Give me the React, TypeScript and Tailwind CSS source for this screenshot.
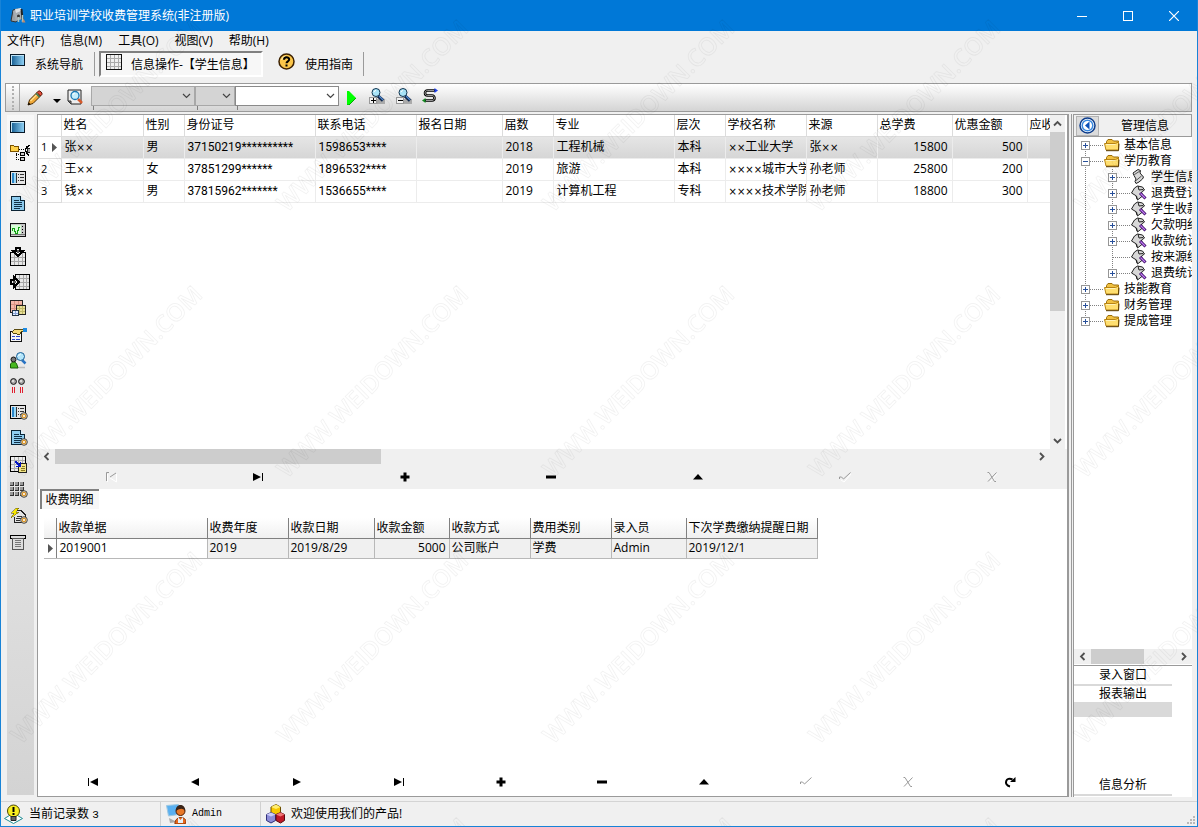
import type { ReactNode } from 'react';

type IconProps = { w?: number; h?: number; children: ReactNode };

const Pix = ({ w = 16, h = 16, children }: IconProps) => (
  <svg width={w} height={h} viewBox={`0 0 ${w} ${h}`} shapeRendering="crispEdges" fill="none" aria-hidden="true" className="shrink-0">
    {children}
  </svg>
);

const Smooth = ({ w = 16, h = 16, children }: IconProps) => (
  <svg width={w} height={h} viewBox={`0 0 ${w} ${h}`} fill="none" aria-hidden="true" className="shrink-0">
    {children}
  </svg>
);

/* ---------- shared icon parts ---------- */

const Gear = () => (
  <g shapeRendering="auto">
    <circle cx="14" cy="12" r="3.300" fill="#e8dcc0" stroke="#333" strokeWidth="0.900" />
    <circle cx="14" cy="12" r="1.700" fill="#fff" stroke="#d8942a" strokeWidth="1.300" />
  </g>
);

const MonitorIcon = () => (
  <Pix w={15} h={12}>
    <defs>
      <linearGradient id="screen" x1="0" x2="1">
        <stop offset="0" stopColor="#1c6498" />
        <stop offset="1" stopColor="#8fd0f4" />
      </linearGradient>
    </defs>
    <rect width="15" height="12" fill="#0a1a28" />
    <rect x="1" y="1" width="13" height="10" fill="#bfe4f8" />
    <rect x="2" y="2" width="12" height="9" fill="url(#screen)" />
  </Pix>
);

const TreeIcon = () => (
  <Pix w={20} h={17}>
    <path d="M0 1h4v1h5v6H0z" fill="#7a5200" />
    <path d="M1 2h3v1h4v4H1z" fill="#ffd24a" />
    <path d="M6.500 9v8M6 10.500h4M6 15.500h4" stroke="#000" strokeDasharray="1 1" />
    <rect x="10.500" y="8.500" width="4" height="3" fill="#ccc" stroke="#000" />
    <rect x="10.500" y="13.500" width="4" height="3" fill="#ccc" stroke="#000" />
    <path d="M9 5.500h6" stroke="#000" strokeDasharray="1 1" />
    <path d="M19.500 1l-3 2.500-1 2.500 1 3 3 2.500" stroke="#000" strokeWidth="1.500" />
    <path d="M17 4h3v5h-3z" fill="#222" />
    <path d="M18 5h2v3h-2z" fill="#aaa" />
  </Pix>
);

const FormIcon = ({ gear = false }: { gear?: boolean }) => (
  <Pix w={18} h={16}>
    <rect x="0.500" y="1.500" width="15" height="13" fill="#e4e4e4" stroke="#000" />
    <rect x="2" y="3" width="4" height="10" fill="#2a86c8" />
    <rect x="4" y="3" width="2" height="10" fill="#9ad8f8" />
    <path d="M6.500 3v10" stroke="#333" />
    <path d="M8 4.500h1M8 7.500h1M8 10.500h1M10 4.500h4M10 7.500h4M10 10.500h4" stroke="#333" />
    {gear && <Gear />}
  </Pix>
);

const PageIcon = ({ gear = false }: { gear?: boolean }) => (
  <Pix w={18} h={16}>
    <path d="M1.500 0.500h9l4 4v10h-13z" fill="#8fcdf0" stroke="#0c2434" />
    <path d="M10.500 0.500v4h4" fill="#d8f0ff" stroke="#0c2434" />
    <path d="M4 4.500h5M4 6.500h8M4 8.500h8M4 10.500h8M4 12.500h6" stroke="#103048" />
    {gear && <Gear />}
  </Pix>
);

const ScopeIcon = () => (
  <Pix w={16} h={14}>
    <rect x="0.500" y="0.500" width="15" height="13" fill="#c8c8c8" stroke="#111" />
    <rect x="1" y="2" width="10" height="9" fill="#d6ffd6" />
    <path d="M2 8V5h2v3h1v2h2V7h1V4h2" stroke="#12a012" />
    <path d="M12.500 3v1M12.500 6v1M12.500 9v1" stroke="#000" />
    <path d="M1 11.500h14" stroke="#777" />
  </Pix>
);

const ImportDownIcon = () => (
  <Pix w={17} h={19}>
    <rect x="0.500" y="5.500" width="15" height="13" fill="#e8e8e8" stroke="#000" />
    <path d="M4.500 6v12M8.500 6v12M12.500 6v12M1 10.500h14M1 14.500h14" stroke="#a8a8a8" />
    <path d="M6 1h4v3h3L8 9 3 4h3z" fill="#eee" stroke="#000" strokeWidth="2" />
    <path d="M7 3h2v3H7z" fill="#555" />
  </Pix>
);

const ImportRightIcon = () => (
  <Pix w={20} h={16}>
    <rect x="5.500" y="0.500" width="14" height="15" fill="#e8e8e8" stroke="#000" />
    <path d="M9.500 1v14M13.500 1v14M16.500 1v14M6 4.500h13M6 8.500h13M6 12.500h13" stroke="#a8a8a8" />
    <path d="M1 6h3V3l5 5-5 5v-3H1z" fill="#eee" stroke="#000" strokeWidth="2" />
    <path d="M3 7h3v2H3z" fill="#555" />
  </Pix>
);

const TablesIcon = () => (
  <Pix w={16} h={16}>
    <rect x="0.500" y="0.500" width="12" height="12" fill="#f3b8aa" stroke="#222" />
    <path d="M4.500 1v11M8.500 1v11M1 4.500h11M1 8.500h11" stroke="#d89484" />
    <rect x="6.500" y="5.500" width="9" height="9" fill="#e8e09a" stroke="#222" />
    <path d="M9.500 6v8M12.500 6v8M7 8.500h8M7 11.500h8" stroke="#c0b868" />
    <rect x="2.500" y="10.500" width="6" height="5" fill="#e4f0ff" stroke="#234" />
    <path d="M5.500 11v4M3 13.500h5" stroke="#8aa4d8" />
  </Pix>
);

const HandFormIcon = () => (
  <Pix w={17} h={15}>
    <rect x="0.500" y="4.500" width="11" height="10" fill="#f4f4f4" stroke="#111" />
    <path d="M2 9.500h3M6 9.500h4M2 12.500h3M6 12.500h4" stroke="#2a48c8" />
    <path d="M2 5l3-3h8l1 2-3 1-1 2H7L6 6H3z" fill="#f4dc78" stroke="#5a4a10" />
    <rect x="13" y="1" width="4" height="4" fill="#1e8ae0" />
  </Pix>
);

const PersonSearchIcon = () => (
  <Smooth w={17} h={17}>
    <path d="M6 15.500h9" stroke="#bbb" strokeWidth="1.500" />
    <path d="M0.500 16v-4l3-3 3 2.500 1.500 4.500z" fill="#46b81e" stroke="#186008" />
    <circle cx="3.500" cy="7.500" r="2.500" fill="#777" stroke="#111" />
    <path d="M12 8l3.500 3.500" stroke="#2a74c4" strokeWidth="2.500" />
    <circle cx="10.500" cy="4.500" r="4" fill="#b4e6fb" stroke="#165c94" />
    <path d="M8.500 4a2 2 0 0 1 2-1.500" stroke="#fff" />
  </Smooth>
);

const PairIcon = () => (
  <Smooth w={16} h={16}>
    <circle cx="3.500" cy="3.500" r="2.900" fill="#aaa" stroke="#111" />
    <circle cx="11.500" cy="3.500" r="2.900" fill="#aaa" stroke="#111" />
    <circle cx="3" cy="3" r="1" fill="#eee" />
    <circle cx="11" cy="3" r="1" fill="#eee" />
    <path d="M2.500 9v6M4.500 9v6M10.500 9v6M12.500 9v6" stroke="#e02030" />
  </Smooth>
);

const GridExportIcon = () => (
  <Pix w={17} h={17}>
    <rect x="0.500" y="0.500" width="15" height="15" fill="#eee" stroke="#000" />
    <path d="M4.500 1v14M8.500 1v14M12.500 1v14M1 4.500h14M1 8.500h14M1 12.500h14" stroke="#b0b0b0" />
    <rect x="8.500" y="7.500" width="8" height="9" fill="#f6e88a" stroke="#222" />
    <path d="M12 10.500h3M11 12.500h4M11 14.500h4" stroke="#8a7a20" />
    <path d="M5 5h2v1h1v1h1v1h1V6h1v5H6v-1h2V9H7V8H6V7H5z" fill="#0818c8" />
  </Pix>
);

const BlocksIcon = () => (
  <Pix w={18} h={16}>
    {[0, 5, 10].map((y) =>
      [0, 5, 10].map((x) => (
        <g key={`${x}-${y}`}>
          <rect x={x} y={y} width="4" height="4" fill="#333" />
          <rect x={x} y={y} width="3" height="3" fill="#999" />
        </g>
      )),
    )}
    <Gear />
  </Pix>
);

const LightningIcon = () => (
  <Pix w={18} h={16}>
    <path d="M7 2.500h4l4 4v8H4V9" fill="#e4e4e4" stroke="#222" />
    <path d="M7 8.500h5M6 10.500h5M6 12.500h4" stroke="#333" />
    <path d="M6 0h3L6 4h3l-8 6 3-5H1z" fill="#f8e800" stroke="#554800" strokeWidth="0.500" />
    <Gear />
  </Pix>
);

const PrinterIcon = () => (
  <Pix w={16} h={15}>
    <rect x="0.500" y="0.500" width="15" height="3" fill="#ddd" stroke="#000" />
    <rect x="2.500" y="3.500" width="11" height="11" fill="#ddd" stroke="#555" />
    <path d="M5 5.500h6M5 7.500h6M5 9.500h6M5 11.500h6" stroke="#777" />
  </Pix>
);

const GridIcon = () => (
  <Pix>
    <rect x="0.500" y="0.500" width="15" height="15" fill="#f0f0f0" stroke="#111" />
    <path d="M4.500 1v14M8.500 1v14M12.500 1v14M1 4.500h14M1 8.500h14M1 12.500h14" stroke="#aaa" />
  </Pix>
);

const HelpIcon = () => (
  <Smooth w={17} h={17}>
    <circle cx="8.500" cy="8.500" r="7.500" fill="#fbc64a" stroke="#3c2000" strokeWidth="1.500" />
    <path d="M3.500 7a5 5 0 0 1 4-4" stroke="#fff2b8" />
    <path d="M6 6.800c0-3.400 5.200-3.200 5.200-.3 0 1.800-2.700 1.900-2.700 3.800" stroke="#000" strokeWidth="2" />
    <rect x="7.500" y="11.500" width="2" height="2" fill="#000" />
  </Smooth>
);

const PencilIcon = () => (
  <Smooth>
    <path d="M1 15l1.500-5L10 2.500 13.500 6 6 13.500z" fill="#f0a838" stroke="#4a2a00" />
    <path d="M3.500 11L11 3.500" stroke="#ffe08a" strokeWidth="1.500" />
    <path d="M10 2.500L11.500 1c1-.8 4.300 1.800 3.500 3.300L13.500 6z" fill="#e4503c" stroke="#5a1408" />
    <path d="M9 3.500L12.500 7" stroke="#2e7a5a" strokeWidth="1.300" />
    <path d="M1 15l.8-2.500 1.700 1.700z" fill="#000" />
  </Smooth>
);

const DocSearchIcon = () => (
  <Smooth>
    <path d="M1 1h13v14H4l-3-3z" fill="#eee" stroke="#222" />
    <path d="M1 12h3v3z" fill="#888" stroke="#333" />
    <path d="M11 10l4 4" stroke="#d85a2c" strokeWidth="2.500" />
    <circle cx="8" cy="6.500" r="4" fill="#c6eefc" stroke="#1c7ab4" strokeWidth="1.300" />
    <path d="M6 6a2 2 0 0 1 2-2" stroke="#fff" />
  </Smooth>
);

const ZoomIcon = ({ plus }: { plus: boolean }) => (
  <Smooth w={17}>
    <rect x="7" y="11" width="9" height="5" fill="#aaa" />
    <path d="M9 8l5 4.500" stroke="#0e2448" strokeWidth="3.200" />
    <path d="M10 8l4 4" stroke="#4e88d0" strokeWidth="1.300" />
    <circle cx="7" cy="4.500" r="4" fill="#a8e4f8" stroke="#123450" />
    <path d="M5 4.200a2 2 0 0 1 2-1.700" stroke="#fff" />
    <g shapeRendering="crispEdges">
      <rect x="0.500" y="9.500" width="7" height="6" fill="#f4f4f4" stroke="#999" />
      <path d={plus ? 'M2 12.500h5M4.500 10v5' : 'M2 12.500h5'} stroke="#000" />
    </g>
  </Smooth>
);

const SwapIcon = () => (
  <Smooth w={16} h={15}>
    <path d="M13 2.500H5.500c-3.300 0-3.300 5 0 5H10c3.300 0 3.300 5 0 5H3" stroke="#000" strokeWidth="2.600" />
    <path d="M12 2.500H5.500c-3.300 0-3.300 5 0 5H10c3.300 0 3.300 5 0 5H4" stroke="#d8d8d8" strokeWidth="0.700" />
    <path d="M12.500 0v5L16 2.500z" fill="#1b3ee8" />
    <path d="M3.500 10v5L0 12.500z" fill="#138a20" />
  </Smooth>
);

const AppLogo = () => (
  <Smooth w={16} h={17}>
    <path d="M1 14L3 3l5-1v10l-2 3z" fill="#9aa0a6" stroke="#333" />
    <path d="M3 4l8-3 1 11-6 2z" fill="#a8adb2" />
    <path d="M5 2l6-1v3L6 6z" fill="#dde0e3" />
    <path d="M11.500 2l1 11" stroke="#222" strokeWidth="2" />
    <circle cx="8.500" cy="9" r="1.500" fill="#333" />
    <path d="M8.500 10v5M12.500 8v7" stroke="#b0c8c4" strokeWidth="1.500" />
    <path d="M12 15.500h3.500l-2-4" fill="#b88a70" />
  </Smooth>
);

const FolderIcon = () => (
  <Smooth w={16} h={13}>
    <path d="M2.500 9V2.500l1.500-2h4l1.500 1.500h5V9z" fill="#f0c040" stroke="#9a6c08" />
    <path d="M0.500 4.500h11l3-1.500v8H2z" fill="#ffdf70" stroke="#b88414" />
    <path d="M2 5.500h9.500" stroke="#fff3b8" />
    <path d="M2 11.700h12.500l.5-7" stroke="#5a3c00" />
  </Smooth>
);

const ScrollIcon = ({ edit }: { edit: boolean }) => (
  <Smooth>
    {edit ? (
      <>
        <path d="M0.500 8l3-5 3-2 5 1 2 3-3 2 1 4-5 4-1-4z" fill="#d8d8d8" stroke="#222" />
        <path d="M7 1l1 4 4-.5M5 11l1 3" stroke="#222" />
        <path d="M9 8l5.500 5.500" stroke="#3c0a68" strokeWidth="3" />
        <path d="M9.500 8.500l4.500 4.500" stroke="#c07cf0" strokeWidth="1.300" />
      </>
    ) : (
      <>
        <path d="M2 4l5-3.500 2.500 1L9 4l3.500 4-1 2-3.500 3-3 1.500-1-2 1-2.500-2-3.500z" fill="#d8d8d8" stroke="#222" />
        <path d="M2 4l1.500 1.500L9 2M5 11.500l5.500-4.500" stroke="#555" />
      </>
    )}
  </Smooth>
);

const Chevron = ({ d }: { d: string }) => (
  <svg width="9" height="9" viewBox="0 0 9 9" fill="none" aria-hidden="true">
    <path d={d} stroke="#505050" strokeWidth="1.800" />
  </svg>
);
const UP = 'M1 6.500L4.500 3 8 6.500';
const DOWN = 'M1 3L4.500 6.500 8 3';
const LEFT = 'M6.500 1L3 4.500 6.500 8';
const RIGHT = 'M3 1l3.500 3.500L3 8';

/* ---------- record navigator ---------- */

const navShapes: Record<string, { label: string; off?: boolean; art: ReactNode }> = {
  first: { label: '首记录', art: <path d="M1 2h1v8H1zM11 2v8L3 6z" fill="#000" /> },
  firstOff: {
    label: '首记录',
    off: true,
    art: (
      <>
        <path d="M2.500 11V3M11.500 3v8L5 7" stroke="#fff" />
        <path d="M4 1.500H1.500V10M11 2L5 6" stroke="#999" />
      </>
    ),
  },
  prev: { label: '上一条', art: <path d="M10 2v8L2 6z" fill="#000" /> },
  next: { label: '下一条', art: <path d="M2 2v8l8-4z" fill="#000" /> },
  last: { label: '末记录', art: <path d="M1 2v8l8-4zM10 2h1v8h-1z" fill="#000" /> },
  add: { label: '添加', art: <path d="M4.500 1.500h3v3h3v3h-3v3h-3v-3h-3v-3h3z" fill="#000" /> },
  del: { label: '删除', art: <path d="M1 4.500h10v3H1z" fill="#000" /> },
  edit: { label: '编辑', art: <path d="M6 3l5 5.500H1z" fill="#000" /> },
  post: {
    label: '保存',
    off: true,
    art: (
      <>
        <path d="M2 9l3 2 7-8" stroke="#fff" />
        <path d="M0.500 8V6h2l2 2 7-6.500" stroke="#999" />
      </>
    ),
  },
  cancel: {
    label: '取消',
    off: true,
    art: (
      <>
        <path d="M3 2.500l7 8.500M11 2.500L4 11" stroke="#fff" />
        <path d="M1.500 1.500h1.500l5.500 9H10M10.500 1.500L2 10.500" stroke="#999" />
      </>
    ),
  },
  refresh: {
    label: '刷新',
    art: (
      <>
        <path d="M6 10.500C-1 9 2 0 8.500 3.500" stroke="#000" strokeWidth="2" />
        <path d="M6 6h5.500V1z" fill="#000" />
      </>
    ),
  },
};

const NavButton = ({ name }: { name: string }) => {
  const { label, off, art } = navShapes[name];
  return (
    <button type="button" aria-label={label} disabled={off} className="flex h-6 items-center justify-center">
      <svg width="12" height="12" viewBox="0 0 12 12" fill="none" aria-hidden="true">{art}</svg>
    </button>
  );
};

/* ---------- data ---------- */

const menus = ['文件(F)', '信息(M)', '工具(O)', '视图(V)', '帮助(H)'];

const studentHead = ['姓名', '性别', '身份证号', '联系电话', '报名日期', '届数', '专业', '层次', '学校名称', '来源', '总学费', '优惠金额', '应收金额'];

const students = [
  ['张××', '男', '37150219**********', '1598653****', '', '2018', '工程机械', '本科', '××工业大学', '张××', '15800', '500', ''],
  ['王××', '女', '37851299******', '1896532****', '', '2019', '旅游', '本科', '××××城市大学', '孙老师', '25800', '200', ''],
  ['钱××', '男', '37815962*******', '1536655****', '', '2019', '计算机工程', '专科', '××××技术学院', '孙老师', '18800', '300', ''],
];

const feeHead = ['收款单据', '收费年度', '收款日期', '收款金额', '收款方式', '费用类别', '录入员', '下次学费缴纳提醒日期'];
const feeRow = ['2019001', '2019', '2019/8/29', '5000', '公司账户', '学费', 'Admin', '2019/12/1'];

type TreeNode = { text: string; level: 0 | 1; box: '+' | '-' | ''; selected?: boolean; above?: boolean; below?: boolean };

const tree: TreeNode[] = [
  { text: '基本信息', level: 0, box: '+', below: true },
  { text: '学历教育', level: 0, box: '-', above: true, below: true },
  { text: '学生信息', level: 1, box: '+', selected: true, above: true, below: true },
  { text: '退费登记', level: 1, box: '+', above: true, below: true },
  { text: '学生收款', level: 1, box: '+', above: true, below: true },
  { text: '欠款明细', level: 1, box: '+', above: true, below: true },
  { text: '收款统计', level: 1, box: '+', above: true, below: true },
  { text: '按来源统计', level: 1, box: '', above: true, below: true },
  { text: '退费统计', level: 1, box: '+', above: true },
  { text: '技能教育', level: 0, box: '+', above: true, below: true },
  { text: '财务管理', level: 0, box: '+', above: true, below: true },
  { text: '提成管理', level: 0, box: '+', above: true },
];

const sideTools: { label: string; icon: ReactNode }[] = [
  { label: '窗口', icon: <MonitorIcon /> },
  { label: '结构', icon: <TreeIcon /> },
  { label: '表单', icon: <FormIcon /> },
  { label: '文档', icon: <PageIcon /> },
  { label: '图表', icon: <ScopeIcon /> },
  { label: '导入', icon: <ImportDownIcon /> },
  { label: '导出', icon: <ImportRightIcon /> },
  { label: '数据表', icon: <TablesIcon /> },
  { label: '属性', icon: <HandFormIcon /> },
  { label: '查找人员', icon: <PersonSearchIcon /> },
  { label: '对比', icon: <PairIcon /> },
  { label: '表单设置', icon: <FormIcon gear /> },
  { label: '文档设置', icon: <PageIcon gear /> },
  { label: '导出表格', icon: <GridExportIcon /> },
  { label: '网格设置', icon: <BlocksIcon /> },
  { label: '快速设置', icon: <LightningIcon /> },
  { label: '打印', icon: <PrinterIcon /> },
];

/* ---------- pieces ---------- */

const TitleBar = () => (
  <header className="flex h-[31px] items-center bg-[#0078d7] pl-[9px] text-white">
    <AppLogo />
    <h1 className="ml-1 flex-1 text-xs">职业培训学校收费管理系统(非注册版)</h1>
    <button type="button" aria-label="最小化" className="flex h-full w-[46px] items-center justify-center">
      <Pix w={10} h={10}><path d="M0 5.500h10" stroke="#fff" /></Pix>
    </button>
    <button type="button" aria-label="最大化" className="flex h-full w-[46px] items-center justify-center">
      <Pix w={10} h={10}><rect x="0.500" y="0.500" width="9" height="9" stroke="#fff" /></Pix>
    </button>
    <button type="button" aria-label="关闭" className="flex h-full w-[46px] items-center justify-center">
      <Smooth w={10} h={10}><path d="M0 0l10 10M10 0L0 10" stroke="#fff" strokeWidth="1.200" /></Smooth>
    </button>
  </header>
);

const Divider = () => <span className="h-6 w-px bg-[#9a9a9a]" />;

const Combo = ({ label, size, disabled = false }: { label: string; size: string; disabled?: boolean }) => (
  <div className={`grid ${size}`}>
    <select
      aria-label={label}
      disabled={disabled}
      className="col-start-1 row-start-1 h-5 w-full appearance-none border border-[#8a8a8a] bg-white disabled:bg-[#d4d4d4] disabled:border-[#a8a8a8]"
    />
    <span className="pointer-events-none z-10 col-start-1 row-start-1 mr-1 self-center justify-self-end">
      <svg width="9" height="9" viewBox="0 0 9 9" fill="none" aria-hidden="true">
        <path d={DOWN} stroke="#444" strokeWidth="1.200" />
      </svg>
    </span>
    <span className="ml-0.5 h-1 w-px bg-[#808080]" />
  </div>
);

const QueryBar = () => (
  <div className="ml-1 mr-[5px] mt-1.5 flex h-[29px] items-center border border-[#9a9a9a] bg-linear-to-b from-white to-[#d4d4d4]">
    <span className="ml-1.5 h-6 w-0 border-l-2 border-dotted border-[#b0b0b0]" />
    <span className="ml-[5px] h-full w-px bg-[#a8a8a8]" />
    <button type="button" aria-label="编辑" className="ml-[7px] flex items-center gap-2.5">
      <PencilIcon />
      <svg width="8" height="16" viewBox="0 0 8 16" aria-hidden="true"><path d="M0 9h8l-4 4z" fill="#000" /></svg>
    </button>
    <button type="button" aria-label="查询" className="mb-0.5 ml-1.5"><DocSearchIcon /></button>
    <div className="ml-2 flex">
      <Combo label="字段" size="w-[104px]" disabled />
      <Combo label="条件" size="w-10" disabled />
      <Combo label="值" size="w-[104px]" />
    </div>
    <button type="button" aria-label="执行" className="ml-2">
      <svg width="9" height="14" viewBox="0 0 9 14" aria-hidden="true"><path d="M0 0h2l7 7-7 7H0z" fill="#0f0" /><path d="M9 7l-7 7H0" stroke="#0a0" fill="none" /></svg>
    </button>
    <button type="button" aria-label="放大" className="mb-1 ml-[13px]"><ZoomIcon plus /></button>
    <button type="button" aria-label="缩小" className="mb-1 ml-2.5"><ZoomIcon plus={false} /></button>
    <button type="button" aria-label="刷新" className="mb-1 ml-[9px]"><SwapIcon /></button>
  </div>
);

// the multiplication signs that mask a name are set wider than the digits
const Masked = ({ text }: { text: string }) => {
  const signs = text.match(/×+/)?.[0];
  if (!signs) return <>{text}</>;
  const [before, after] = text.split(signs);
  return (
    <>
      {before}
      <span className="font-['DejaVu_Sans'] text-[10px]">{signs}</span>
      {after}
    </>
  );
};

const StudentTable = () => (
  <table className="w-[1064px] table-fixed border-collapse text-left">
    <colgroup>
      <col className="w-[23px]" />
      <col className="w-[82px]" />
      <col className="w-[41px]" />
      <col className="w-[131px]" />
      <col className="w-[101px]" />
      <col className="w-[86px]" />
      <col className="w-[51px]" />
      <col className="w-[121px]" />
      <col className="w-[51px]" />
      <col className="w-[81px]" />
      <col className="w-[71px]" />
      <col className="w-[75px]" />
      <col className="w-[75px]" />
      <col className="w-[75px]" />
    </colgroup>
    <thead>
      <tr className="h-[21px]">
        <th className="border-b border-r border-[#dcdcdc]" aria-label="序号" />
        {studentHead.map((h) => (
          <th key={h} className="overflow-hidden whitespace-nowrap border-b border-r border-[#dcdcdc] px-0.5 font-normal">{h}</th>
        ))}
      </tr>
    </thead>
    <tbody>
      {students.map((row, i) => (
        <tr key={row[2]} className={`h-[22px] ${i === 0 ? 'bg-linear-to-b from-[#e6e6e6] to-[#d6d6d6]' : ''}`}>
          <td className="border-b border-r border-[#dcdcdc] bg-white pl-[3px] pr-1 text-[11px]">
            <span className="flex items-center justify-between">
              {i + 1}
              {i === 0 && (
                <svg width="5" height="9" viewBox="0 0 5 9" aria-hidden="true"><path d="M0 0l5 4.500L0 9z" fill="#555" /></svg>
              )}
            </span>
          </td>
          {row.map((cell, j) => (
            <td
              key={j}
              className={`overflow-hidden whitespace-nowrap border-b border-r border-[#ececec] pl-[3px] leading-4 ${j >= 10 ? 'pr-1 text-right' : ''} ${j === 2 || j === 3 ? "font-['Roboto']" : ''}`}
            >
              <Masked text={cell} />
            </td>
          ))}
        </tr>
      ))}
    </tbody>
  </table>
);

const FeeTable = () => (
  <table className="ml-1.5 mt-[9px] w-[773px] table-fixed border-collapse text-left">
    <colgroup>
      <col className="w-3" />
      <col className="w-[151px]" />
      <col className="w-[81px]" />
      <col className="w-[86px]" />
      <col className="w-[75px]" />
      <col className="w-[81px]" />
      <col className="w-[81px]" />
      <col className="w-[75px]" />
      <col className="w-[131px]" />
    </colgroup>
    <thead>
      <tr className="h-5 bg-linear-to-b from-white to-[#f0f0f0]">
        <th className="border-b border-r border-[#808080]" aria-label="当前行" />
        {feeHead.map((h) => (
          <th key={h} className="whitespace-nowrap border-b border-r border-[#808080] pl-0.5 font-normal leading-4">{h}</th>
        ))}
      </tr>
    </thead>
    <tbody>
      <tr className="h-5 bg-[#f0f0f0]">
        <td className="border-b border-r border-b-[#b8b8b8] border-r-[#808080] bg-white pl-1">
          <svg width="5" height="9" viewBox="0 0 5 9" aria-hidden="true"><path d="M0 0l5 4.500L0 9z" fill="#555" /></svg>
        </td>
        {feeRow.map((cell, j) => (
          <td
            key={j}
            className={`whitespace-nowrap border-b border-r border-[#b8b8b8] leading-4 ${j === 0 ? 'bg-white pl-[3px]' : 'pl-0.5'} ${j === 3 ? 'pr-[3px] text-right' : ''}`}
          >
            {cell}
          </td>
        ))}
      </tr>
    </tbody>
  </table>
);

const Branch = ({ node }: { node: TreeNode }) => {
  const w = node.level ? 57 : 30;
  const cx = node.level ? 38.5 : 11.5;
  return (
    <svg width={w} height="16" viewBox={`0 0 ${w} 16`} fill="none" shapeRendering="crispEdges" aria-hidden="true" className="shrink-0">
      <g stroke="#808080" strokeDasharray="1 1">
        {node.level === 1 && <path d="M11.500 0v16" />}
        {node.above && <path d={`M${cx} 0v8`} />}
        {node.below && <path d={`M${cx} 8v8`} />}
        <path d={`M${cx} 8.500H${w}`} />
      </g>
      {node.box && (
        <>
          <rect x={cx - 4} y="4.500" width="8" height="8" fill="#fff" stroke="#969696" />
          <path d={`M${cx - 2.5} 8.500h5${node.box === '+' ? `M${cx} 6v5` : ''}`} stroke="#28509a" />
        </>
      )}
    </svg>
  );
};

const SidePanel = () => (
  <aside className="flex w-[119px] shrink-0 flex-col border-l border-t border-[#9a9a9a] bg-white">
    <div className="flex h-[22px] items-center border-b border-r border-[#9a9a9a] bg-[#f0f0f0] pl-0.5">
      <button type="button" aria-label="返回" className="flex h-5 w-[23px] items-center justify-center border border-[#b4b4b4] bg-[#dcdcdc]">
        <Smooth w={17} h={17}>
          <circle cx="8.500" cy="8.500" r="7.500" fill="#fff" stroke="#0c3c8c" strokeWidth="1.500" />
          <circle cx="8.500" cy="8.500" r="5.300" fill="#fff" stroke="#3a8ae0" strokeWidth="1.500" />
          <path d="M10.500 4.500v8l-4.500-4z" fill="#0a50b8" />
        </Smooth>
      </button>
      <h2 className="flex-1 text-center">管理信息</h2>
    </div>
    <ul className="flex-1 overflow-hidden">
      {tree.map((node) => (
        <li key={node.text}>
          <button type="button" className="flex h-4 w-full items-center overflow-hidden whitespace-nowrap">
            <Branch node={node} />
            {node.level ? <ScrollIcon edit={!node.selected} /> : <FolderIcon />}
            <span className={`ml-1 leading-4 ${node.selected ? 'bg-[#f0f0f0]' : ''}`}>{node.text}</span>
          </button>
        </li>
      ))}
    </ul>
    <div className="flex h-[15px] items-center bg-[#f0f0f0]">
      <button type="button" aria-label="向左滚动" className="flex w-[17px] justify-center"><Chevron d={LEFT} /></button>
      <span className="h-full w-[53px] bg-[#cdcdcd]" />
      <button type="button" aria-label="向右滚动" className="ml-auto flex w-[17px] justify-center"><Chevron d={RIGHT} /></button>
    </div>
    <div className="mt-px flex h-[132px] flex-col items-start border-t border-[#9a9a9a]">
      <button type="button" className="h-5 w-[98px] border-b-2 border-[#d9d9d9] leading-4">录入窗口</button>
      <button type="button" className="h-4 w-[98px] leading-4">报表输出</button>
      <span className="h-[15px] w-[98px] bg-[#d9d9d9]" />
      <button type="button" className="mb-px mt-auto h-5 w-[98px] border-b-2 border-[#d9d9d9] leading-4">信息分析</button>
    </div>
  </aside>
);

const StatusBar = () => (
  <footer className="mt-1 flex h-[25px] items-center border-t border-[#d4d4d4]">
    <div className="flex w-[159px] items-center gap-1.5 pl-[3px]">
      <Smooth w={19} h={20}>
        <path d="M9.500 9l9 5.500-9 5-9-5z" fill="#fff" stroke="#1c8c94" />
        <circle cx="9.500" cy="7" r="6" fill="#f8ee20" stroke="#4a4400" />
        <path d="M7 12.500h5v4H7z" fill="#666" stroke="#222" />
        <path d="M9.500 3v5M9.500 9v2" stroke="#000" strokeWidth="2" />
      </Smooth>
      <span>当前记录数 <span className="font-['Liberation_Mono',monospace] text-[11px]">3</span></span>
    </div>
    <div className="flex h-6 w-[100px] items-center gap-1.5 border-l border-[#d0d0d0] pl-[5px]">
      <Smooth w={20} h={20}>
        <path d="M0.500 1.500l12-1v10l-10 1.500z" fill="#5ab0f0" stroke="#a0c8e0" />
        <path d="M3 14l8 4-7 1z" fill="#aaa" />
        <path d="M9 20c-1-8 12-9 11-1l-2 1z" fill="#e8681c" stroke="#8a3000" />
        <path d="M12 13l2.500 3 2.500-3v6h-5z" fill="#e4f0f8" />
        <circle cx="14.500" cy="7" r="4.500" fill="#e87828" stroke="#501c00" />
        <path d="M10 7c-1-8 10-8 9 0-2-3-5-3-9 0z" fill="#3a2418" />
      </Smooth>
      <span className="font-['Liberation_Mono',monospace] text-[10px]">Admin</span>
    </div>
    <div className="flex h-6 flex-1 items-center gap-1.5 border-l border-[#d0d0d0] pl-[5px]">
      <Smooth w={19} h={20}>
        <path d="M5 3l5-2.500L14.500 3v6L10 12 5 9z" fill="#f8c800" stroke="#6a4c00" />
        <path d="M5 3l5 2 4.500-2L10 0.500z" fill="#ffee70" />
        <path d="M0.500 10.500l4.500-2 4.500 2v6l-4.500 2.500-4.500-2.500z" fill="#8c8cd8" stroke="#30307a" />
        <path d="M0.500 10.500l4.500-2 4.500 2-4.500 2z" fill="#ccccf8" />
        <path d="M10 10.500l4.500-2 4 2v6L14.500 19 10 16.500z" fill="#c01828" stroke="#5a0810" />
        <path d="M10 10.500l4.500-2 4 2-4 2z" fill="#f07878" />
      </Smooth>
      <span>欢迎使用我们的产品!</span>
    </div>
    <svg width="10" height="10" viewBox="0 0 10 10" fill="#b8b8b8" aria-hidden="true" className="mr-px self-end">
      <path d="M7 0h2v2H7zM7 3h2v2H7zM4 3h2v2H4zM7 6h2v2H7zM4 6h2v2H4zM1 6h2v2H1z" />
    </svg>
  </footer>
);

const Watermark = () => (
  <svg className="pointer-events-none absolute inset-0 z-20 h-full w-full" aria-hidden="true">
    <defs>
      <pattern id="mark" width="266" height="266" patternUnits="userSpaceOnUse">
        <text
          x="0"
          y="0"
          transform="translate(20 213) rotate(-45)"
          className="font-['Open_Sans',sans-serif] text-[24px] font-semibold"
          fill="none"
          stroke="#000"
          strokeOpacity="0.060"
          strokeWidth="0.700"
        >
          WWW.WEIDOWN.COM
        </text>
      </pattern>
    </defs>
    <rect width="100%" height="100%" fill="url(#mark)" />
  </svg>
);

const App = () => (
  <div className="relative flex min-h-screen flex-col overflow-hidden border-x border-b border-[#1883d7] bg-[#f0f0f0] font-['Open_Sans','Noto_Sans_CJK_SC',sans-serif] text-xs text-black">
    <TitleBar />

    <nav className="flex h-5 items-center gap-4 pl-1.5">
      {menus.map((m) => (
        <button key={m} type="button">{m}</button>
      ))}
    </nav>

    <div className="flex h-[26px] items-center">
      <button type="button" className="flex h-full w-[93px] items-center gap-2.5 pl-[9px]">
        <span className="mb-2"><MonitorIcon /></span>
        <span className="mt-0.5">系统导航</span>
      </button>
      <Divider />
      <button type="button" className="ml-1 flex h-full w-[164px] items-center gap-[9px] border-2 border-b-white border-l-[#808080] border-r-white border-t-[#808080] bg-[#f7f7f7] pl-[5px]">
        <span className="mb-1"><GridIcon /></span>
        <span className="mt-0.5 whitespace-nowrap">信息操作-【学生信息】</span>
      </button>
      <span className="ml-1"><Divider /></span>
      <button type="button" className="ml-[11px] flex h-full items-center gap-2.5 pr-2.5">
        <span className="mb-1.5"><HelpIcon /></span>
        <span className="mt-0.5">使用指南</span>
      </button>
      <Divider />
    </div>

    <QueryBar />

    <div className="mr-[5px] mt-0.5 flex flex-1 pl-1.5">
      <div className="mb-0.5 mt-px flex w-[27px] shrink-0 flex-col bg-linear-to-b from-[#f8f8f8] to-[#d3d3d3]">
        {sideTools.map((t, i) => (
          <button key={t.label} type="button" aria-label={t.label} className={`flex items-center pl-[3px] ${i === 0 ? 'h-6' : 'h-[26px]'}`}>
            {t.icon}
          </button>
        ))}
      </div>

      <main className="ml-[3px] flex min-w-0 flex-1 flex-col border-b border-l border-r-2 border-t border-[#9a9a9a] bg-white">
        <div className="flex h-[334px]">
          <div className="min-w-0 flex-1 overflow-hidden">
            <StudentTable />
          </div>
          <div className="mr-0.5 flex w-[15px] flex-col items-center bg-[#f0f0f0]">
            <button type="button" aria-label="向上滚动" className="flex h-[17px] items-center"><Chevron d={UP} /></button>
            <span className="h-[179px] w-full bg-[#cdcdcd]" />
            <button type="button" aria-label="向下滚动" className="mt-auto flex h-[17px] items-center"><Chevron d={DOWN} /></button>
          </div>
        </div>
        <div className="flex h-[15px] items-center bg-[#f0f0f0] pr-[17px]">
          <button type="button" aria-label="向左滚动" className="flex w-[17px] justify-center"><Chevron d={LEFT} /></button>
          <span className="h-full w-[326px] bg-[#cdcdcd]" />
          <button type="button" aria-label="向右滚动" className="ml-auto flex w-[17px] justify-center"><Chevron d={RIGHT} /></button>
        </div>
        <div className="grid grid-cols-7 bg-[#f0f0f0] pr-0.5 pt-px">
          {['firstOff', 'last', 'add', 'del', 'edit', 'post', 'cancel'].map((n) => (
            <NavButton key={n} name={n} />
          ))}
        </div>

        <button type="button" className="ml-0.5 h-5 w-[59px] border-l-2 border-t-2 border-[#808080] bg-[#f7f7f7] pr-0.5 text-center leading-4">
          收费明细
        </button>
        <FeeTable />
        <div className="mt-auto grid grid-cols-10 pl-1 pr-1.5 pb-0.5">
          {['first', 'prev', 'next', 'last', 'add', 'del', 'edit', 'post', 'cancel', 'refresh'].map((n) => (
            <NavButton key={n} name={n} />
          ))}
        </div>
      </main>

      <span className="ml-0.5 mr-px w-px bg-[#9a9a9a]" />
      <SidePanel />
    </div>

    <StatusBar />
    <Watermark />
  </div>
);

export default App;
